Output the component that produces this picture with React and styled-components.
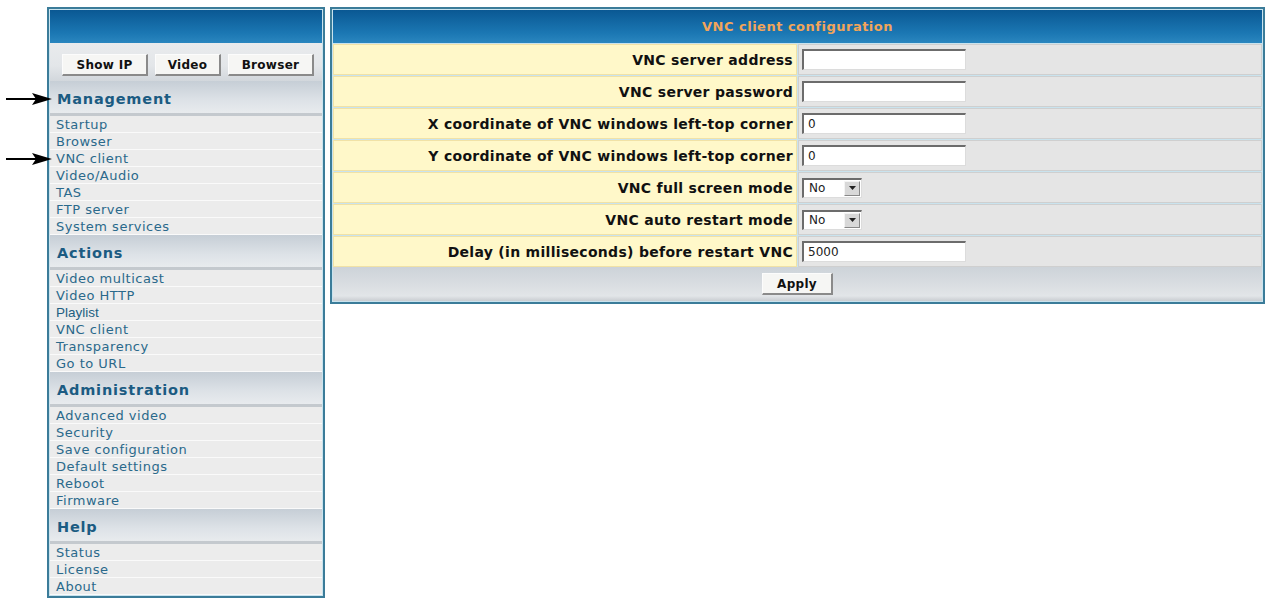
import React from "react";
import styled, { createGlobalStyle } from "styled-components";

const GlobalStyle = createGlobalStyle`
body {
  margin: 0;
  background: #ffffff;
  font-family: "DejaVu Sans", Verdana, sans-serif;
}
`;

const Page = styled.div`
position: relative;
display: flex;
align-items: flex-start;
gap: 5px;
padding: 7px 0 0 47px;
`;

const Arrow = styled.svg`
position: absolute;
left: 6px;
top: ${({ top }) => top}px;
`;

const Panel = styled.div`
box-sizing: border-box;
width: ${({ width }) => width}px;
border: 2px solid #3b7c99;
padding: 1px;
background: #c9e3ee;
display: flex;
flex-direction: column;
`;

const BlueBar = styled.div`
height: 33px;
background: linear-gradient(#0a5893, #1b77b3 70%, #2a86bf);
display: flex;
align-items: center;
justify-content: center;
color: #f2a55a;
font-weight: bold;
font-size: 13px;
letter-spacing: 0.5px;
`;

const ButtonBar = styled.div`
height: 38px;
box-sizing: border-box;
display: flex;
align-items: center;
gap: 7px;
padding: 6px 0 0 12px;
background: linear-gradient(#e9ebed, #e3e6e9 60%, #d2d7dc);
`;

const RaisedButton = styled.button`
box-sizing: border-box;
width: ${({ w }) => w}px;
height: 22px;
padding: 0;
background: #f6f6f4;
border: 1px solid #fcfcfc;
border-right: 2px solid #8a8a8a;
border-bottom: 2px solid #8a8a8a;
font-family: "DejaVu Sans", Verdana, sans-serif;
font-weight: bold;
font-size: 12px;
letter-spacing: 0.3px;
color: #111;
`;

const SectionHeader = styled.div`
height: 35px;
box-sizing: border-box;
display: flex;
align-items: center;
padding: 3px 0 0 7px;
border-bottom: 3px solid #c4c9ce;
background: linear-gradient(#c6ced6, #dde2e7 60%, #e8ebee);
color: #1b5b82;
font-weight: bold;
font-size: 14.5px;
letter-spacing: 0.8px;
`;

const NavItem = styled.div`
height: 17px;
box-sizing: border-box;
line-height: 17px;
padding-left: 6px;
border-bottom: 1px solid #fafafa;
background: #ececec;
font-family: ${({ arial }) =>
  arial ? '"Liberation Sans", Arial, sans-serif' : '"DejaVu Sans", Verdana, sans-serif'};
font-size: ${({ arial }) => (arial ? "13.5px" : "13px")};
letter-spacing: ${({ arial }) => (arial ? "0" : "0.5px")};
color: ${({ arial }) => (arial ? "#215f82" : "#2a698b")};
`;

const Rows = styled.div`
display: flex;
flex-direction: column;
gap: 1px;
padding-top: 1px;
`;

const Row = styled.div`
display: flex;
gap: 1px;
height: 31px;
`;

const LabelCell = styled.div`
box-sizing: border-box;
width: 464px;
border: 1px solid #f1e2a6;
background: #fff8c9;
display: flex;
align-items: center;
justify-content: flex-end;
padding: 1px 3px 0 0;
font-weight: bold;
font-size: 14px;
letter-spacing: 0.3px;
color: #111;
`;

const ValueCell = styled.div`
box-sizing: border-box;
flex: 1;
border: 1px solid #cfcfcf;
background: #e5e5e5;
display: flex;
align-items: center;
padding-left: 3px;
`;

const TextInput = styled.div`
box-sizing: border-box;
width: 164px;
height: 21px;
background: #ffffff;
border-top: 2px solid #6c6c6c;
border-left: 2px solid #6c6c6c;
border-right: 1px solid #dcdcdc;
border-bottom: 1px solid #dcdcdc;
padding-left: 4px;
font-size: 12px;
line-height: 18px;
color: #222;
`;

const SelectBox = styled.div`
box-sizing: border-box;
width: 60px;
height: 20px;
background: #ffffff;
border-top: 2px solid #6c6c6c;
border-left: 2px solid #6c6c6c;
border-right: 1px solid #dcdcdc;
border-bottom: 1px solid #dcdcdc;
display: flex;
align-items: center;
justify-content: space-between;
padding: 0 1px 0 5px;
font-size: 12px;
color: #222;
`;

const SelectArrow = styled.span`
box-sizing: border-box;
width: 16px;
height: 15px;
background: #d8d8d8;
border: 1px solid #f4f4f4;
border-right-color: #888;
border-bottom-color: #888;
display: flex;
align-items: center;
justify-content: center;
`;

const ApplyBar = styled.div`
height: 34px;
display: flex;
align-items: center;
justify-content: center;
background: linear-gradient(#cdd3d9, #d9dde1 50%, #e2e5e8 85%, #c9cdd1);
`;

const fields = [
  { label: "VNC server address", value: "" },
  { label: "VNC server password", value: "" },
  { label: "X coordinate of VNC windows left-top corner", value: "0" },
  { label: "Y coordinate of VNC windows left-top corner", value: "0" },
  { label: "VNC full screen mode", select: "No" },
  { label: "VNC auto restart mode", select: "No" },
  { label: "Delay (in milliseconds) before restart VNC", value: "5000" },
];

const menu = [
  {
    title: "Management",
    items: ["Startup", "Browser", "VNC client", "Video/Audio", "TAS", "FTP server", "System services"],
  },
  {
    title: "Actions",
    items: ["Video multicast", "Video HTTP", "Playlist", "VNC client", "Transparency", "Go to URL"],
  },
  {
    title: "Administration",
    items: ["Advanced video", "Security", "Save configuration", "Default settings", "Reboot", "Firmware"],
  },
  { title: "Help", items: ["Status", "License", "About"] },
];

const ArrowIcon = ({ top }) => (
  <Arrow top={top} width="46" height="12" viewBox="0 0 46 12">
    <line x1="0" y1="6" x2="32" y2="6" stroke="#000" strokeWidth="2" />
    <path d="M26 0 L46 6 L26 12 L30 6 Z" fill="#000" />
  </Arrow>
);

export default function App() {
  return (
    <>
      <GlobalStyle />
      <Page>
        <ArrowIcon top={93} />
        <ArrowIcon top={153} />
        <Panel width={278}>
          <BlueBar />
          <ButtonBar>
            <RaisedButton w={86}>Show IP</RaisedButton>
            <RaisedButton w={66}>Video</RaisedButton>
            <RaisedButton w={86}>Browser</RaisedButton>
          </ButtonBar>
          {menu.map((section) => (
            <React.Fragment key={section.title}>
              <SectionHeader>{section.title}</SectionHeader>
              {section.items.map((item) => (
                <NavItem key={item} arial={item === "Playlist"}>
                  {item}
                </NavItem>
              ))}
            </React.Fragment>
          ))}
        </Panel>
        <Panel width={935}>
          <BlueBar>VNC client configuration</BlueBar>
          <Rows>
            {fields.map((f) => (
              <Row key={f.label}>
                <LabelCell>{f.label}</LabelCell>
                <ValueCell>
                  {f.select ? (
                    <SelectBox>
                      {f.select}
                      <SelectArrow>
                        <svg width="7" height="4" viewBox="0 0 7 4">
                          <path d="M0 0 H7 L3.5 4 Z" fill="#222" />
                        </svg>
                      </SelectArrow>
                    </SelectBox>
                  ) : (
                    <TextInput>{f.value}</TextInput>
                  )}
                </ValueCell>
              </Row>
            ))}
          </Rows>
          <ApplyBar>
            <RaisedButton w={71}>Apply</RaisedButton>
          </ApplyBar>
        </Panel>
      </Page>
    </>
  );
}
